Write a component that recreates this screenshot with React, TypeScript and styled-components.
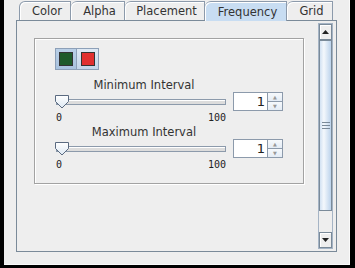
import styled, { createGlobalStyle } from "styled-components";

const Global = createGlobalStyle`
  html, body {
    margin: 0;
    padding: 0;
    background: #000;
  }
  body {
    font-family: "DejaVu Sans", "Liberation Sans", sans-serif;
    font-size: 11.5px;
    color: #333;
  }
`;

const Frame = styled.div`
  width: 355px;
  height: 268px;
  box-sizing: border-box;
  padding: 0 5px 3px 4px;
  background: #000;
`;

const Window = styled.div`
  height: 100%;
  box-sizing: border-box;
  background: #eeeeee;
  border-right: 1px solid #fafafa;
  border-bottom: 1px solid #fafafa;
  padding: 1px 12px 12px 12px;
  display: flex;
  flex-direction: column;
`;

const TabRow = styled.div`
  display: flex;
  padding-left: 3px;
  height: 19px;
  position: relative;
  z-index: 1;
`;

const Tab = styled.div<{ $w: number; $active?: boolean }>`
  width: ${(p) => p.$w}px;
  box-sizing: border-box;
  height: ${(p) => (p.$active ? 20 : 19)}px;
  border: 1px solid #8c9aab;
  border-bottom: none;
  border-left: none;
  border-top-left-radius: 6px;
  box-shadow: inset 1px 1px 0 #ffffff;
  background: ${(p) => (p.$active ? "#c8ddf2" : "#eeeeee")};
  display: flex;
  align-items: center;
  justify-content: center;
  padding-left: 4px;
  color: #333;
  &:first-child {
    border-left: 1px solid #8c9aab;
  }
`;

const Panel = styled.div`
  flex: 1;
  border: 1px solid #7a8a99;
  background: #eeeeee;
  padding: 2px 3px 2px 2px;
  display: flex;
`;

const Viewport = styled.div`
  flex: 1;
  padding: 15px 14px 0 15px;
`;

const Group = styled.div`
  width: 270px;
  height: 146px;
  box-sizing: border-box;
  border: 1px solid #a2a2a2;
  box-shadow: inset 1px 1px 0 #fff, 1px 1px 0 #fff;
  padding: 9px 0 0 19px;
`;

const SwatchBar = styled.div`
  display: flex;
  margin-left: 1px;
  margin-bottom: 8px;
`;

const SwatchButton = styled.div<{ $on?: boolean }>`
  width: 22px;
  height: 22px;
  box-sizing: border-box;
  border: 1px solid #8da0b8;
  background: ${(p) =>
    p.$on
      ? "linear-gradient(#b9cfe6, #a9c2de)"
      : "linear-gradient(#dfe9f4, #c3d6ea)"};
  display: flex;
  align-items: center;
  justify-content: center;
  & + & {
    border-left: none;
  }
`;

const Swatch = styled.div<{ $c: string }>`
  width: 14px;
  height: 14px;
  box-sizing: border-box;
  border: 1px solid #333;
  background: ${(p) => p.$c};
`;

const IntervalBlock = styled.div`
  display: grid;
  grid-template-columns: 172px 50px;
  column-gap: 7px;
`;

const Caption = styled.div`
  grid-column: 1;
  text-align: center;
  padding-left: 8px;
  height: 15px;
  line-height: 15px;
  color: #333;
`;

const SliderBox = styled.div`
  grid-column: 1;
  height: 17px;
  position: relative;
  display: flex;
  align-items: center;
`;

const Track = styled.div`
  flex: 1;
  margin-left: 2px;
  height: 4px;
  border: 1px solid #8c9aab;
  background: #dcdcdc;
  box-shadow: inset 1px 1px 0 #fff;
`;

const Thumb = styled.svg`
  position: absolute;
  left: 0;
  top: 1px;
`;

const Ticks = styled.div`
  grid-column: 1;
  display: flex;
  justify-content: space-between;
  font-family: "DejaVu Sans Mono", "Liberation Mono", monospace;
  font-size: 10px;
  color: #222;
  height: 14px;
  line-height: 14px;
  padding-left: 2px;
`;

const Spinner = styled.div`
  grid-column: 2;
  grid-row: 2;
  display: flex;
  height: 19px;
  margin-top: -1px;
  border: 1px solid #8c9aab;
  box-sizing: border-box;
`;

const SpinField = styled.div`
  flex: 1;
  background: #fff;
  text-align: right;
  padding-right: 2px;
  line-height: 17px;
  color: #222;
  font-size: 13px;
`;

const SpinButtons = styled.div`
  width: 14px;
  display: flex;
  flex-direction: column;
  border-left: 1px solid #8c9aab;
`;

const SpinArrow = styled.div<{ $down?: boolean }>`
  flex: 1;
  background: linear-gradient(#f6f9fc, #e4ecf5);
  display: flex;
  align-items: center;
  justify-content: center;
  font-size: 5px;
  color: #999;
  border-top: ${(p) => (p.$down ? "1px solid #8c9aab" : "none")};
`;

const ScrollBar = styled.div`
  width: 16px;
  display: flex;
  flex-direction: column;
  border: 1px solid #a5b4c5;
  box-sizing: border-box;
`;

const ScrollBtn = styled.div`
  height: 14px;
  background: #eeeeee;
  border: 1px solid #7a8a99;
  box-shadow: inset 1px 1px 0 #fff;
  display: flex;
  align-items: center;
  justify-content: center;
`;

const ScrollThumb = styled.div`
  height: 171px;
  box-sizing: border-box;
  border: 1px solid #7a8a99;
  background: linear-gradient(90deg, #d2e2f3 0%, #f4f8fc 35%, #bcd3ec 100%);
  display: flex;
  align-items: center;
  justify-content: center;
`;

const Grip = styled.div`
  width: 8px;
  height: 5px;
  border-top: 1px solid #7a8a99;
  border-bottom: 1px solid #7a8a99;
  position: relative;
  &::after {
    content: "";
    position: absolute;
    left: 0;
    right: 0;
    top: 2px;
    border-top: 1px solid #7a8a99;
  }
`;

const ScrollTrack = styled.div`
  flex: 1;
  background: #eeeeee;
`;

const Arrow = ({ down }: { down?: boolean }) => (
  <svg width="7" height="4" viewBox="0 0 7 4">
    <path d={down ? "M0 0h7L3.5 4z" : "M3.5 0L7 4H0z"} fill="#222" />
  </svg>
);

function Interval({ label }: { label: string }) {
  return (
    <IntervalBlock>
      <Caption>{label}</Caption>
      <SliderBox>
        <Track />
        <Thumb width="16" height="15" viewBox="0 0 16 15">
          <defs>
            <linearGradient id="tg" x1="0" y1="0" x2="0" y2="1">
              <stop offset="0" stopColor="#ffffff" />
              <stop offset="1" stopColor="#dde8f3" />
            </linearGradient>
          </defs>
          <path
            d="M1.5 1.5h13v6l-6.5 6.5l-6.5-6.5z"
            fill="url(#tg)"
            stroke="#5a6a80"
          />
        </Thumb>
      </SliderBox>
      <Spinner>
        <SpinField>1</SpinField>
        <SpinButtons>
          <SpinArrow>▲</SpinArrow>
          <SpinArrow $down>▼</SpinArrow>
        </SpinButtons>
      </Spinner>
      <Ticks>
        <span>0</span>
        <span>100</span>
      </Ticks>
    </IntervalBlock>
  );
}

const tabs = [
  { name: "Color", w: 52 },
  { name: "Alpha", w: 54 },
  { name: "Placement", w: 80 },
  { name: "Frequency", w: 82, active: true },
  { name: "Grid", w: 46 },
];

export default function App() {
  return (
    <Frame>
      <Global />
      <Window>
        <TabRow>
          {tabs.map((t) => (
            <Tab key={t.name} $w={t.w} $active={t.active}>
              {t.name}
            </Tab>
          ))}
        </TabRow>
        <Panel>
          <Viewport>
            <Group>
              <SwatchBar>
                <SwatchButton $on>
                  <Swatch $c="#1e5a2a" />
                </SwatchButton>
                <SwatchButton>
                  <Swatch $c="#e03030" />
                </SwatchButton>
              </SwatchBar>
              <Interval label="Minimum Interval" />
              <Interval label="Maximum Interval" />
            </Group>
          </Viewport>
          <ScrollBar>
            <ScrollBtn>
              <Arrow />
            </ScrollBtn>
            <ScrollThumb>
              <Grip />
            </ScrollThumb>
            <ScrollTrack />
            <ScrollBtn>
              <Arrow down />
            </ScrollBtn>
          </ScrollBar>
        </Panel>
      </Window>
    </Frame>
  );
}
